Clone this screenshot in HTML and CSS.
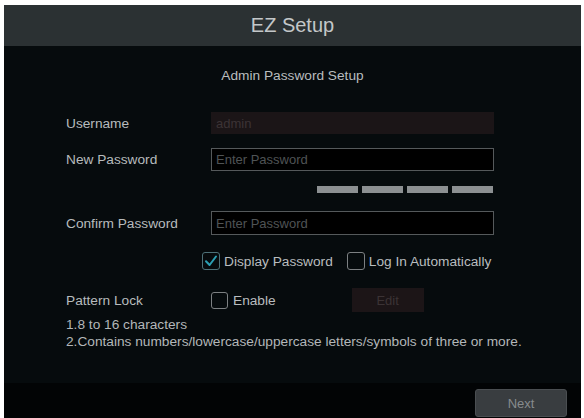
FILE: index.html
```html
<!DOCTYPE html>
<html>
<head>
<meta charset="utf-8">
<link rel="stylesheet" href="styles.css">
</head>
<body>
<div class="panel">
  <div class="header">EZ Setup</div>
  <div class="content">
    <div class="subtitle">Admin Password Setup</div>
    <div class="row row-user">
      <div class="label">Username</div>
      <div class="input disabled">admin</div>
    </div>
    <div class="row row-new">
      <div class="label">New Password</div>
      <div class="input">Enter Password</div>
    </div>
    <div class="bars">
      <span class="bar"></span><span class="bar"></span><span class="bar"></span><span class="bar"></span>
    </div>
    <div class="row row-confirm">
      <div class="label">Confirm Password</div>
      <div class="input">Enter Password</div>
    </div>
    <div class="checks">
      <span class="cb checked"><svg viewBox="0 0 18 18" width="18" height="18"><path d="M4 9.2 L7.6 13 L14 4.5" fill="none" stroke="#2b9fb3" stroke-width="2" stroke-linecap="round" stroke-linejoin="round"/></svg></span>
      <span class="cb-text">Display Password</span>
      <span class="cb cb-gap"></span>
      <span class="cb-text">Log In Automatically</span>
    </div>
    <div class="row row-pattern">
      <div class="label">Pattern Lock</div>
      <div class="pattern">
        <span class="cb"></span>
        <span class="cb-text">Enable</span>
        <span class="edit">Edit</span>
      </div>
    </div>
    <div class="notes">
      <div>1.8 to 16 characters</div>
      <div>2.Contains numbers/lowercase/uppercase letters/symbols of three or more.</div>
    </div>
  </div>
  <div class="footer">
    <span class="next">Next</span>
  </div>
</div>
</body>
</html>
```
FILE: styles.css
```css
html, body {
  margin: 0;
  padding: 0;
  background: #ffffff;
}
body {
  font-family: "Liberation Sans", Arial, sans-serif;
  font-size: 13.7px;
  color: #b7bbbd;
}
.panel {
  margin: 5px 3px 0 4px;
  height: 413px;
  display: flex;
  flex-direction: column;
  background: #060b0d;
}
.header {
  height: 41px;
  background: #2b3133;
  color: #c3c7c9;
  font-size: 20px;
  display: flex;
  align-items: center;
  justify-content: center;
}
.content {
  flex: 1;
  display: flex;
  flex-direction: column;
  padding-left: 62px;
}
.subtitle {
  margin-top: 22px;
  height: 16px;
  line-height: 16px;
  text-align: center;
  margin-left: -62px;
  color: #b9bdbf;
}
.row {
  display: grid;
  grid-template-columns: 145px 283px;
  align-items: center;
}
.row-user { margin-top: 28px; height: 22px; }
.row-new { margin-top: 14px; height: 23px; }
.row-confirm { margin-top: 18px; height: 24px; }
.row-pattern { margin-top: 18px; height: 24px; }
.input {
  height: 100%;
  box-sizing: border-box;
  border: 1px solid #55595b;
  background: #000000;
  color: #4f5355;
  font-size: 13px;
  padding-left: 4px;
  display: flex;
  align-items: center;
}
.input.disabled {
  border: none;
  background: #1b1517;
  color: #3c3335;
  padding-left: 5px;
}
.bars {
  margin-top: 15px;
  height: 7px;
  display: flex;
  gap: 4px;
  padding-left: 251px;
}
.bar {
  width: 41px;
  height: 7px;
  background: #8c9092;
}
.checks {
  margin-top: 17px;
  height: 18px;
  display: flex;
  align-items: center;
  padding-left: 136px;
}
.cb {
  width: 18px;
  height: 18px;
  box-sizing: border-box;
  border: 1.5px solid #7c8082;
  border-radius: 3px;
  display: inline-flex;
  align-items: center;
  justify-content: center;
  flex: none;
}
.cb.checked {
  border-color: #4d7178;
}
.cb.checked svg {
  margin: -1.5px;
}
.cb-text {
  margin-left: 4px;
  color: #b9bdbf;
}
.cb-gap {
  margin-left: 14px;
}
.pattern {
  display: flex;
  align-items: center;
  height: 24px;
}
.pattern .cb {
  width: 17px;
  height: 17px;
}
.pattern .cb-text {
  margin-left: 5px;
}
.edit {
  margin-left: 76px;
  width: 72px;
  height: 24px;
  background: #1c1517;
  color: #3b3335;
  font-size: 13px;
  display: flex;
  align-items: center;
  justify-content: center;
}
.notes {
  margin-top: 4px;
  line-height: 17px;
  color: #b3b7b9;
}
.footer {
  height: 35px;
  background: #020405;
  display: flex;
  justify-content: flex-end;
  align-items: flex-start;
  padding-right: 14px;
}
.next {
  margin-top: 6px;
  width: 92px;
  height: 28px;
  box-sizing: border-box;
  border: 1px solid #4a4e51;
  border-radius: 3px;
  background: #393d40;
  color: #878b8d;
  font-size: 13px;
  display: flex;
  align-items: center;
  justify-content: center;
}
```
